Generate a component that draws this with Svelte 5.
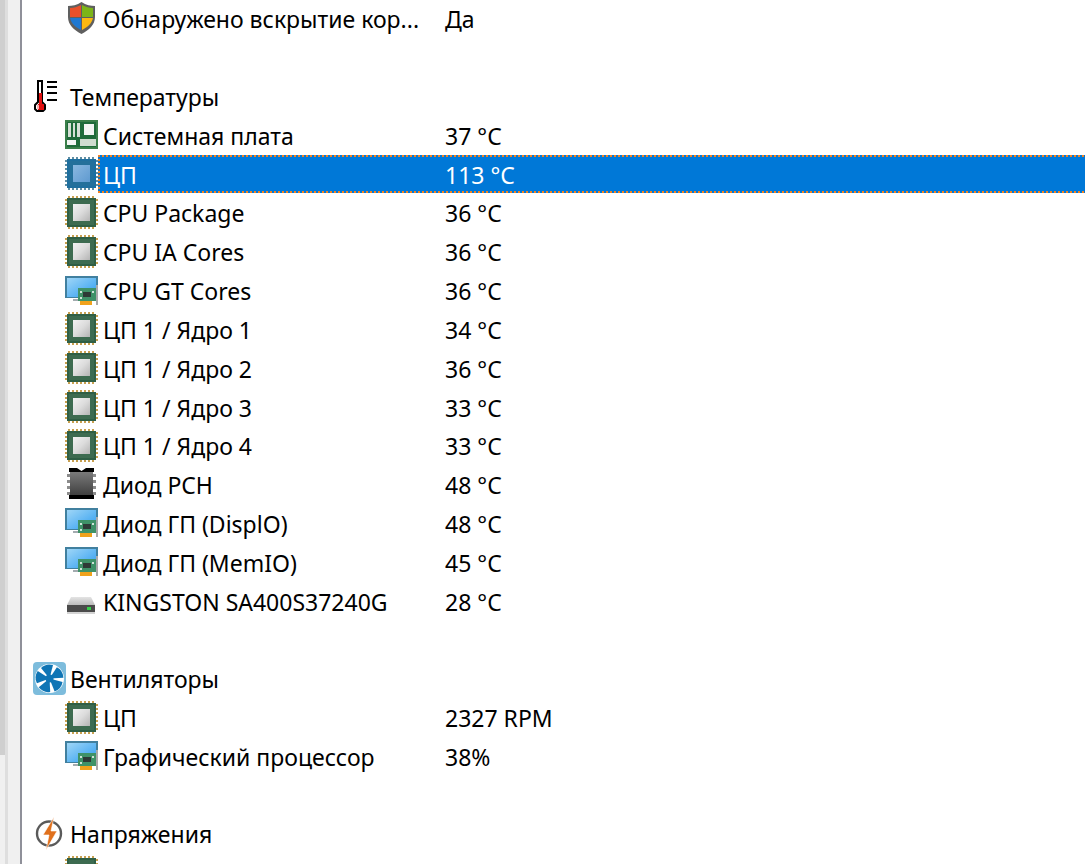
<script lang="ts">
    type Row = { icon?: string; label?: string; value?: string; group?: boolean; selected?: boolean };

    const rows: Row[] = [
        { icon: "shield", label: "Обнаружено вскрытие кор...", value: "Да" },
        {},
        { icon: "thermo", label: "Температуры", group: true },
        { icon: "board", label: "Системная плата", value: "37 °C" },
        { icon: "cpu", label: "ЦП", value: "113 °C", selected: true },
        { icon: "cpu", label: "CPU Package", value: "36 °C" },
        { icon: "cpu", label: "CPU IA Cores", value: "36 °C" },
        { icon: "gpu", label: "CPU GT Cores", value: "36 °C" },
        { icon: "cpu", label: "ЦП 1 / Ядро 1", value: "34 °C" },
        { icon: "cpu", label: "ЦП 1 / Ядро 2", value: "36 °C" },
        { icon: "cpu", label: "ЦП 1 / Ядро 3", value: "33 °C" },
        { icon: "cpu", label: "ЦП 1 / Ядро 4", value: "33 °C" },
        { icon: "chip", label: "Диод PCH", value: "48 °C" },
        { icon: "gpu", label: "Диод ГП (DisplO)", value: "48 °C" },
        { icon: "gpu", label: "Диод ГП (MemIO)", value: "45 °C" },
        { icon: "ssd", label: "KINGSTON SA400S37240G", value: "28 °C" },
        {},
        { icon: "fan", label: "Вентиляторы", group: true },
        { icon: "cpu", label: "ЦП", value: "2327 RPM" },
        { icon: "gpu", label: "Графический процессор", value: "38%" },
        {},
        { icon: "bolt", label: "Напряжения", group: true },
        { icon: "cpu" },
    ];

    const pins = [3, 7, 11, 15, 19, 23, 27];
    const blades = [0, 72, 144, 216, 288];
    const legs = [6, 12, 18, 24];
</script>

{#snippet cpu(selected: boolean)}
    <svg viewBox="0 0 33 33" width="33" height="33">
        {#each pins as p}
            <g fill={selected ? "#5f8ea3" : "#c8a050"}>
                <rect x={p} y="0" width="2" height="2" />
                <rect x={p} y="31" width="2" height="2" />
                <rect x="0" y={p} width="2" height="2" />
                <rect x="31" y={p} width="2" height="2" />
            </g>
        {/each}
        <rect x="2" y="2" width="29" height="29" fill={selected ? "#1f6f9f" : "#2f5f45"} />
        <rect x="4" y="4" width="25" height="25" fill={selected ? "#24709b" : "#3d6b50"} />
        <rect x="8" y="8" width="17" height="17" fill={selected ? "url(#cpu-blue)" : "url(#cpu-gray)"} />
    </svg>
{/snippet}

{#snippet gpu()}
    <svg viewBox="0 0 33 33" width="33" height="33">
        <rect x="0" y="2" width="33" height="22" fill="#41809f" />
        <rect x="2" y="4" width="29" height="19" fill="url(#screen)" />
        <rect x="8" y="25" width="6" height="2" fill="#a4abb0" />
        <rect x="31" y="11" width="2" height="20" fill="#a9a9a9" />
        <rect x="13" y="14" width="18" height="13" fill="#3f9268" />
        <rect x="18" y="18" width="8" height="5" fill="#2e3a36" />
        <rect x="15" y="17" width="2" height="2" fill="#cfe3d8" />
        <rect x="15" y="23" width="2" height="2" fill="#cfe3d8" />
        <rect x="27" y="17" width="2" height="2" fill="#cfe3d8" />
        <rect x="15" y="27" width="12" height="4" fill="#f0a21c" />
    </svg>
{/snippet}

<div class="page">
    <svg class="defs" width="0" height="0" aria-hidden="true">
        <defs>
            <linearGradient id="cpu-gray" x1="0" y1="0" x2="1" y2="1">
                <stop offset="0" stop-color="#f2f2f2" />
                <stop offset="0.5" stop-color="#dcdcdc" />
                <stop offset="1" stop-color="#b4b4b4" />
            </linearGradient>
            <linearGradient id="cpu-blue" x1="0" y1="0" x2="1" y2="1">
                <stop offset="0" stop-color="#8ab8e0" />
                <stop offset="1" stop-color="#5f9ad0" />
            </linearGradient>
            <linearGradient id="screen" x1="0" y1="0" x2="1" y2="1">
                <stop offset="0" stop-color="#9fd6f7" />
                <stop offset="1" stop-color="#2e9df0" />
            </linearGradient>
            <linearGradient id="chip-body" x1="0" y1="0" x2="0" y2="1">
                <stop offset="0" stop-color="#7a7a7a" />
                <stop offset="1" stop-color="#404040" />
            </linearGradient>
            <linearGradient id="ssd-top" x1="0" y1="0" x2="0" y2="1">
                <stop offset="0" stop-color="#e4e4e4" />
                <stop offset="1" stop-color="#bcbcbc" />
            </linearGradient>
        </defs>
    </svg>

    <div class="rail">
        <div class="thumb-track"><div class="thumb"></div></div>
        <div class="track-edge"></div>
        <div class="track"></div>
        <div class="divider"></div>
    </div>

    <div class="list">
        {#each rows as row}
            <div class="row" class:group={row.group}>
                {#if row.icon}
                    <span class="icon">
                        {#if row.icon === "cpu"}
                            {@render cpu(!!row.selected)}
                        {:else if row.icon === "gpu"}
                            {@render gpu()}
                        {:else if row.icon === "shield"}
                            <svg viewBox="0 0 33 33" width="33" height="33">
                                <path d="M16.5 0 C12 3 7 4 3 4 L3 15 C3 23 9 28 16.5 32 C24 28 30 23 30 15 L30 4 C26 4 21 3 16.5 0Z" fill="#5f5f5f" />
                                <path d="M16 3 C12 5 9 6 5 6 L5 15 L16 15Z" fill="#e8502a" />
                                <path d="M17 3 C21 5 24 6 28 6 L28 15 L17 15Z" fill="#7cb518" />
                                <path d="M5 16 L16 16 L16 28 C10 25 6 21 5 16Z" fill="#1f78d1" />
                                <path d="M17 16 L28 16 C27 21 23 25 17 28Z" fill="#fbb811" />
                            </svg>
                        {:else if row.icon === "thermo"}
                            <svg viewBox="0 0 33 33" width="33" height="33">
                                <path d="M5 1 H9 V22 L12 25 V29 L10 31 H4 L2 29 V25 L5 22 Z" fill="#fff" stroke="#000" stroke-width="2" />
                                <rect x="6" y="13" width="3" height="12" fill="#e01010" />
                                <rect x="5" y="24" width="6" height="6" fill="#e01010" />
                                <rect x="4" y="25" width="2" height="4" fill="#f6b0b0" />
                                <rect x="14" y="1" width="10" height="2" />
                                <rect x="14" y="6" width="10" height="2" />
                                <rect x="14" y="12" width="10" height="2" />
                                <rect x="14" y="19" width="10" height="2" />
                            </svg>
                        {:else if row.icon === "board"}
                            <svg viewBox="0 0 33 33" width="33" height="33">
                                <rect y="2" width="33" height="29" fill="#3b7f4a" />
                                <rect x="2" y="4" width="29" height="25" fill="#1f6b3a" />
                                <rect x="3" y="5" width="3" height="14" fill="#d6e0d6" />
                                <rect x="8" y="5" width="2" height="14" fill="#d6e0d6" />
                                <rect x="12" y="5" width="3" height="14" fill="#d6e0d6" />
                                <rect x="19" y="6" width="10" height="11" fill="#f3f5f3" />
                                <rect x="2" y="22" width="9" height="5" fill="#f4f6f4" />
                                <rect x="15" y="21" width="16" height="7" fill="#cfdccf" />
                            </svg>
                        {:else if row.icon === "chip"}
                            <svg viewBox="0 0 33 33" width="33" height="33">
                                <path d="M4 0 H12 L16.5 3 L21 0 H29 V4 H4 Z" fill="#000" />
                                <rect x="4" y="27" width="25" height="4" fill="#000" />
                                <rect x="5" y="4" width="23" height="23" fill="url(#chip-body)" />
                                <g fill="#8c8c8c">
                                    {#each legs as y}
                                        <rect x="2" {y} width="3" height="3" />
                                        <rect x="28" {y} width="3" height="3" />
                                    {/each}
                                </g>
                            </svg>
                        {:else if row.icon === "ssd"}
                            <svg viewBox="0 0 33 33" width="33" height="33">
                                <path d="M6 13 H26 L30 21 H2 Z" fill="url(#ssd-top)" />
                                <rect x="2" y="21" width="28" height="7" fill="#4b4b4b" />
                                <rect x="2" y="28" width="28" height="2" fill="#d4d4d4" />
                                <rect x="22" y="23" width="4" height="3" fill="#35d04a" />
                            </svg>
                        {:else if row.icon === "fan"}
                            <svg viewBox="0 0 33 33" width="33" height="33">
                                <rect width="33" height="33" rx="4" fill="#7dbcdc" />
                                <circle cx="16.5" cy="16.5" r="14.5" fill="#fff" />
                                <g fill="#0f75b5">
                                    {#each blades as angle}
                                        <path d="M16.5 16.5 L8 6 Q13 1 20 3 Z" transform="rotate({angle} 16.5 16.5)" />
                                    {/each}
                                    <circle cx="16.5" cy="16.5" r="4" />
                                </g>
                            </svg>
                        {:else if row.icon === "bolt"}
                            <svg viewBox="0 0 33 33" width="33" height="33">
                                <circle cx="16" cy="16.5" r="12" fill="#fff" stroke="#5a5a5a" stroke-width="2.4" />
                                <path d="M21 0 L10 18 H16 L13 33 L24 14 H18 Z" fill="#e0701c" stroke="#fff" stroke-width="0.6" />
                            </svg>
                        {/if}
                    </span>
                {/if}
                {#if row.label}
                    <div class="cell" class:selected={row.selected}>
                        <span class="label">{row.label}</span>
                        {#if row.value}<span class="value">{row.value}</span>{/if}
                    </div>
                {/if}
            </div>
        {/each}
    </div>
</div>

<style>
    :global(body) {
        margin: 0;
        background: #fff;
    }

    .page {
        position: relative;
        display: flex;
        width: 1085px;
        height: 864px;
        overflow: hidden;
        background: #fff;
        color: #000;
        font-family: "Noto Sans", "Open Sans", sans-serif;
        font-size: 23px;
    }

    .defs {
        position: absolute;
    }

    .rail {
        display: flex;
        flex: none;
    }

    .thumb-track {
        width: 5px;
        background: #f0f0f0;
    }

    .thumb {
        height: 755px;
        background: #cfcfcf;
    }

    .track-edge {
        width: 3px;
        background: #dedede;
    }

    .track {
        width: 12px;
        background: #f0f0f0;
    }

    .divider {
        width: 2px;
        background: #8f9099;
    }

    .list {
        flex: 1;
        min-width: 0;
        margin-top: -1px;
    }

    .row {
        display: flex;
        align-items: center;
        height: 38.82px;
        padding-left: 43px;
    }

    .row.group {
        padding-left: 11px;
    }

    .icon {
        display: flex;
        flex: none;
        width: 33px;
        height: 33px;
    }

    .cell {
        display: flex;
        flex: 1;
        align-items: center;
        box-sizing: border-box;
        height: 38px;
        padding: 2px 0 0 5px;
    }

    .group .cell {
        padding-left: 4px;
    }

    .cell.selected {
        background:
            repeating-linear-gradient(90deg, #f5821f 0 2px, transparent 2px 4px) top / 100% 2px no-repeat,
            repeating-linear-gradient(90deg, #f5821f 0 2px, transparent 2px 4px) bottom / 100% 2px no-repeat,
            repeating-linear-gradient(0deg, #f5821f 0 2px, transparent 2px 4px) left / 2px 100% no-repeat,
            #0078d7;
        color: #fff;
    }

    .label {
        flex: none;
        width: 342px;
        white-space: nowrap;
    }

    .value {
        white-space: nowrap;
    }
</style>
